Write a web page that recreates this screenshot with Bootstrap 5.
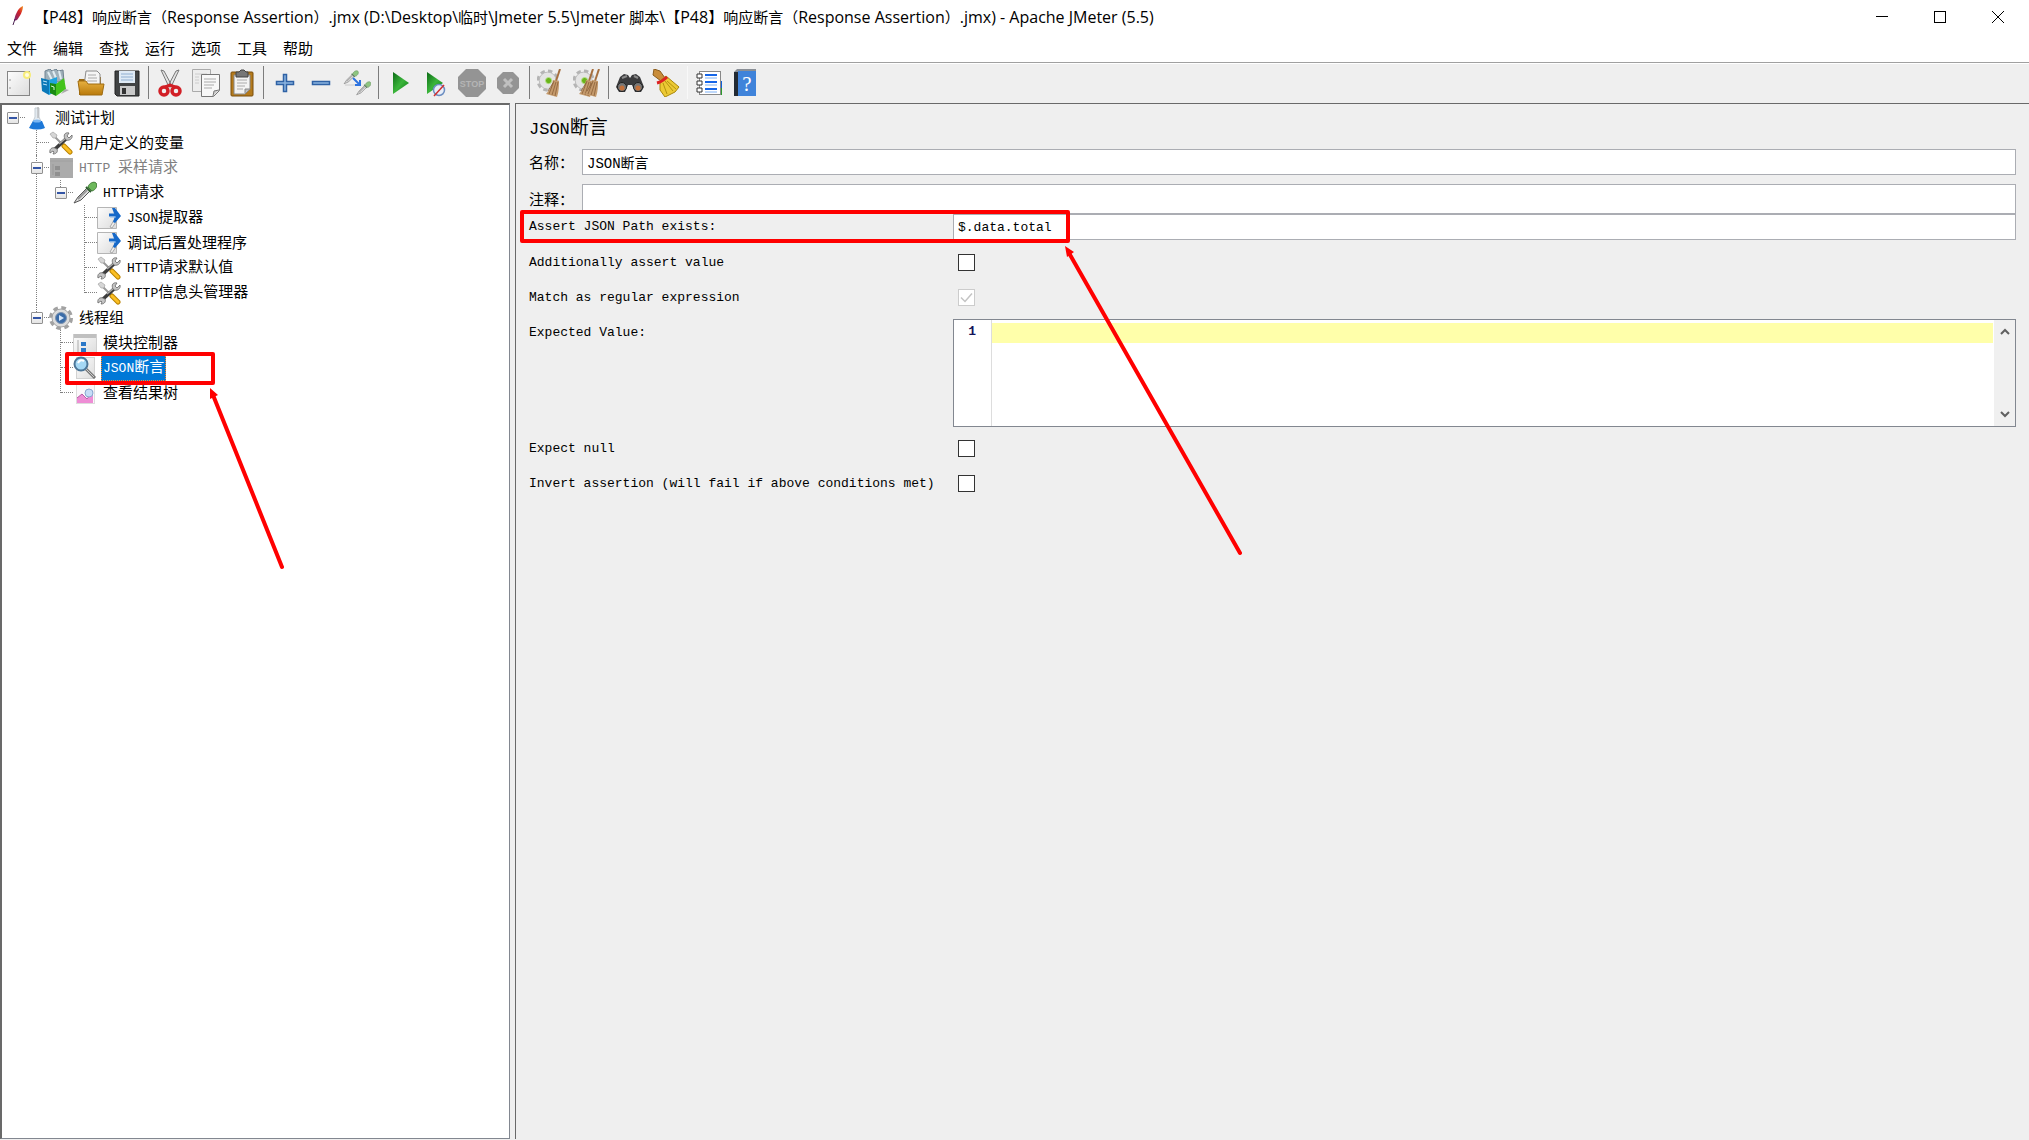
<!DOCTYPE html>
<html lang="zh-CN">
<head>
<meta charset="utf-8">
<meta name="viewport" content="width=device-width, initial-scale=1">
<title>Apache JMeter (5.5)</title>
<link rel="stylesheet" href="https://cdn.jsdelivr.net/npm/bootstrap@5.3.0/dist/css/bootstrap.min.css">
<style>
  :root { --face: #efefef; --edge: #696969; --field: #abadb3; }
  body { font-family: "Liberation Mono", "Noto Sans CJK SC", monospace; font-size: 13px; line-height: 20px; color: #000; background: var(--face); }
  .zh { font-family: "Noto Sans CJK SC", sans-serif; font-size: 15px; }
  svg { display: block; flex: none; }
  .titlebar { height: 36px; padding: 0 2px 2px 4px; background: #fff; }
  .title-text { font-family: "Open Sans", "Noto Sans CJK SC", sans-serif; font-size: 16px; white-space: nowrap; text-spacing-trim: space-all; padding-left: 2px; }
  .win-btn { width: 58px; height: 34px; border: 0; background: transparent; padding: 0; }
  .menubar { height: 27px; padding-left: 7px; gap: 16px; background: #fff; border-bottom: 1px solid #a0a0a0; }
  .menubar a { color: #000; font-family: "Noto Sans CJK SC", sans-serif; font-size: 15px; line-height: 24px; text-decoration: none; }
  .toolbar { height: 40px; padding: 0 0 2px 1px; border-top: 1px solid #fff; }
  .tool { width: 36px; height: 36px; border: 0; padding: 0; background: transparent; display: flex; align-items: center; justify-content: center; }
  .tool-sep { width: 1px; height: 33px; margin: 0 3px; background: #7c7c7c; }
  .tool-sep.faint { background: #f8f8f8; }
  .work { min-height: 0; padding-bottom: 1px; gap: 5px; }
  .tree-pane { width: 510px; flex: none; background: #fff; border: 1px solid #828790; border-width: 2px 1px 1px 2px; border-color: #696969 #828790 #828790 #696969; }
  .tree, .tree ul { list-style: none; margin: 0; padding: 0; }
  .tree { margin-left: -1px; }
  .tree ul { padding-left: 24px; }
  .tree li { position: relative; }
  .tree ul > li::before { content: ""; position: absolute; left: 11px; top: 0; bottom: 0; border-left: 1px dotted #808080; }
  .tree ul > li:last-child::before { bottom: auto; height: 13px; }
  .node { position: relative; display: flex; align-items: center; height: 25px; }
  .node::before { content: ""; position: absolute; left: 12px; width: 12px; top: 12px; border-top: 1px dotted #808080; }
  .twist { position: relative; width: 12px; height: 12px; margin: 0 6px; padding: 0; border: 1px solid #919191; border-radius: 1px; background: linear-gradient(#fff, #e4e4e4); display: flex; align-items: center; justify-content: center; flex: none; }
  .twist::before { content: ""; width: 8px; height: 2px; background: #3455a5; }
  .leaf { width: 24px; flex: none; }
  .caption-text { margin-left: 4px; padding: 0 2px; line-height: 24px; white-space: nowrap; }
  .caption-text.zh { line-height: 22px; padding-bottom: 2px; }
  .node.off .caption-text { color: #808080; }
  .node.sel .caption-text { background: #0078d7; color: #fff; outline: 1px dotted #ff8728; outline-offset: -1px; }
  .panel { border-left: 1px solid var(--edge); border-top: 1px solid var(--edge); padding: 8px 13px 0 13px; min-width: 0; }
  .panel-title { font-size: 17px; line-height: 28px; height: 28px; margin: 0 0 9px; font-weight: 400; }
  .panel-title .zh { font-size: 19px; line-height: 28px; }
  .name-row { margin-bottom: 9px; }
  .field { border: 1px solid var(--field); border-radius: 0; background: #fff; color: #000; padding: 0 4px; height: 26px; font-size: 13px; line-height: 20px; min-width: 0; }
  .field.mixed { font-size: 14px; }
  .field.tall { height: 30px; }
  .short-label { width: 53px; flex: none; }
  .long-label { width: 424px; flex: none; white-space: nowrap; }
  .opts { padding-top: 5px; }
  .opt { height: 35px; }
  .tick { appearance: none; width: 17px; height: 17px; margin: 0 0 0 5px; border: 1px solid #333; background: #fff; border-radius: 0; }
  .tick:disabled { border-color: #ccc; background: #fff url("data:image/svg+xml,%3Csvg xmlns='http://www.w3.org/2000/svg' viewBox='0 0 15 15'%3E%3Cpath d='M2 7.500l4 4 7-8' fill='none' stroke='%23c4c4c4' stroke-width='1.500'/%3E%3C/svg%3E"); }
  .editor { height: 108px; border: 1px solid #828790; background: #fff; }
  .gutter { width: 38px; border-right: 1px solid #ddd; padding: 2px 15px 0 0; text-align: right; font-weight: 700; color: #14145a; }
  .code { border: 0; resize: none; padding: 3px 4px; font-size: 13px; line-height: 20px; outline: 0; overflow: hidden; background: linear-gradient(#ffffaa, #ffffaa) 0 3px / 100% 20px no-repeat; }
  .scroller { width: 22px; background: #f0f0f0; border-left: 1px solid #fff; }
  .scroller button { border: 0; padding: 0; height: 23px; background: transparent; display: flex; align-items: center; justify-content: center; }
  .notes { position: absolute; left: 0; top: 0; pointer-events: none; }
</style>
<script src="https://cdn.jsdelivr.net/npm/bootstrap@5.3.0/dist/js/bootstrap.bundle.min.js"></script>
</head>
<body class="d-flex flex-column vh-100 overflow-hidden position-relative">

<svg width="0" height="0" class="position-absolute" aria-hidden="true">
  <defs>
    <linearGradient id="paper" x1="0" y1="0" x2="1" y2="1"><stop offset="0" stop-color="#fdfdfd"/><stop offset="1" stop-color="#dcdcdc"/></linearGradient>
    <linearGradient id="green" x1="0" y1="0" x2="1" y2="1"><stop offset="0" stop-color="#0c6b16"/><stop offset=".5" stop-color="#3bb53b"/><stop offset="1" stop-color="#0a7a12"/></linearGradient>
    <linearGradient id="gold" x1="0" y1="0" x2="0" y2="1"><stop offset="0" stop-color="#e7b040"/><stop offset="1" stop-color="#b97a0b"/></linearGradient>
    <symbol id="tools" viewBox="0 0 24 24">
      <path d="M5 5l9 9" stroke="#999" stroke-width="2"/><path d="M1 3l3-2 4 3-1 3-3 0z" fill="#d6d6d6" stroke="#999" stroke-width=".6"/>
      <path d="M15 15l6 6" stroke="#b98200" stroke-width="5" stroke-linecap="round"/><path d="M15 15l6 6" stroke="#fbbf24" stroke-width="3" stroke-linecap="round"/>
      <path d="M18 7L5 19" stroke="#3c3c3c" stroke-width="3.500"/><path d="M17 7L10 13" stroke="#aaa" stroke-width="1.500"/>
      <path d="M16 8c-2-4 0-7 4-6l-2 3 2 2 3-3c1 4-3 6-6 5zM6 17c-3-1-6 1-5 5l3-2 1 1-1 2c4 0 5-3 4-5z" fill="#c4c4c4" stroke="#666" stroke-width=".8"/>
    </symbol>
    <symbol id="post" viewBox="0 0 24 24">
      <path d="M.5 1.500h19v21H.5z" fill="url(#paper)" stroke="#b5b5b5"/>
      <path d="M13 21l4-7 2 2-4 6z" fill="#eee" stroke="#999" stroke-width=".8"/>
      <path d="M12 9h7" stroke="#1669c9" stroke-width="3"/><path d="M15 2l3 0 6 8-6 7-2-1 2-6z" fill="#1669c9"/><path d="M13 11h6" stroke="#8dbbec"/>
    </symbol>
    <symbol id="dropper" viewBox="0 0 24 24">
      <path d="M1 22l4-6 9-9 3 3-9 9z" fill="#ddd" stroke="#555"/><path d="M5 18l9-9" stroke="#999" stroke-width="2"/>
      <path d="M13 6l5 5" stroke="#2d5c2d" stroke-width="2"/><path d="M15 6c1-4 6-6 8-4s0 7-4 8z" fill="#6db85c" stroke="#417b36"/>
    </symbol>
    <symbol id="cogbroom" viewBox="0 0 28 28">
      <circle cx="12" cy="13" r="10" fill="none" stroke="#b4b4b4" stroke-width="5" stroke-dasharray="4.500 3.354"/><circle cx="12" cy="13" r="9.500" fill="#e4e4e4" stroke="#b8b8b8"/>
      <circle cx="13" cy="13" r="3.500" fill="#69b519" stroke="#b8df8f"/>
    </symbol>
    <symbol id="brush" viewBox="0 0 16 28">
      <path d="M14 0l-4 12" stroke="#a66f3f" stroke-width="2"/><path d="M7 11l6 1c0 5 0 10-2 16L0 25c4-4 6-9 7-14z" fill="#c49a6c"/>
      <path d="M8 12L3 25M10 13L6 26M12 13L9 27M7 14l-5 8" stroke="#8a5f38" stroke-width=".8"/>
    </symbol>
  </defs>
</svg>

<header class="titlebar d-flex align-items-center">
  <svg width="28" height="28" viewBox="0 0 28 28"><defs><linearGradient id="fe" x1="1" y1="0" x2="0" y2="1"><stop offset="0" stop-color="#f69923"/><stop offset=".4" stop-color="#d22128"/><stop offset="1" stop-color="#6d2a7c"/></linearGradient></defs><path d="M19 3c-4 1-8 8-9 15l3-1c3-4 6-9 6-14z" fill="url(#fe)"/><path d="M11 16l-2 6" stroke="#4a2050"/></svg>
  <span class="title-text flex-grow-1"><span class="zh">【</span>P48<span class="zh">】响应断言（</span>Response Assertion<span class="zh">）</span>.jmx (D:\Desktop\<span class="zh">临时</span>\Jmeter 5.5\Jmeter <span class="zh">脚本</span>\<span class="zh">【</span>P48<span class="zh">】响应断言（</span>Response Assertion<span class="zh">）</span>.jmx) - Apache JMeter (5.5)</span>
  <button class="win-btn" aria-label="最小化"><svg class="mx-auto" width="12" height="12"><path d="M0 5.500h12" stroke="#000"/></svg></button>
  <button class="win-btn" aria-label="最大化"><svg class="mx-auto" width="12" height="12"><rect x=".5" y=".5" width="11" height="11" fill="none" stroke="#000"/></svg></button>
  <button class="win-btn" aria-label="关闭"><svg class="mx-auto" width="12" height="12"><path d="M0 0l12 12M12 0L0 12" stroke="#000"/></svg></button>
</header>

<nav class="menubar d-flex">
  <a href="#">文件</a><a href="#">编辑</a><a href="#">查找</a><a href="#">运行</a><a href="#">选项</a><a href="#">工具</a><a href="#">帮助</a>
</nav>

<div class="toolbar d-flex align-items-center" role="toolbar" aria-label="工具栏">
  <button class="tool" aria-label="新建"><svg width="28" height="28"><rect x="2.500" y="2.500" width="22" height="24" fill="url(#paper)" stroke="#858585"/><path d="M5 10v2M5 18v2" stroke="#999"/><circle cx="22" cy="6" r="4" fill="#f7ec7a"/><circle cx="22" cy="6" r="2" fill="#fffde0"/></svg></button>
  <button class="tool" aria-label="模板"><svg width="28" height="28"><path d="M4 2l5-2 2 2 4-2 2 2 5-1 1 12H4z" fill="#9fb0ba" stroke="#6f8290"/><path d="M7 3l4 8M12 2l3 7M18 2l2 8" stroke="#e1edf2" stroke-width="2"/><path d="M0 9l8 2v15l-7-4z" fill="#0a78b8"/><path d="M8 11l8-3v14l-8 4z" fill="#1fa4e0"/><path d="M2 12l4 1M2 15l4 1" stroke="#bfe6fa"/><path d="M9 14l6 1v12l-6-3z" fill="#1a8a12"/><path d="M15 15l8-6 2 11-10 7z" fill="#44c31c"/><path d="M10 17l3 1v3" stroke="#d6f5cb" fill="none"/><path d="M24 20l4 1-8 4z" fill="#aaa"/></svg></button>
  <button class="tool" aria-label="打开"><svg width="28" height="28"><path d="M2 10h6l2-2h14v18H2z" fill="#9a6a14"/><path d="M9 2h11l3 3v12H7z" fill="#f5f5f5" stroke="#8c8c8c"/><path d="M11 6h8M11 9h9M10 12h10" stroke="#aaa"/><path d="M1 12h8l2 3h16l-2 11H3z" fill="url(#gold)" stroke="#a06c10"/></svg></button>
  <button class="tool" aria-label="保存"><svg width="28" height="28"><path d="M2 2h24v25H4l-2-2z" fill="#414344" stroke="#222"/><rect x="6" y="2" width="16" height="12" fill="#dfeaf5"/><path d="M8 5h12M8 8h12M8 11h12" stroke="#90aed0"/><rect x="7" y="17" width="15" height="9" fill="#c9c9c9"/><rect x="9" y="19" width="4" height="6" fill="#333"/></svg></button>
  <span class="tool-sep"></span>
  <button class="tool" aria-label="剪切"><svg width="28" height="28"><path d="M5 1l3 1 8 15-3 1zM23 1l-3 1-8 15 3 1z" fill="#e4e4e4" stroke="#777"/><ellipse cx="8" cy="22" rx="4" ry="4" fill="none" stroke="#d21f26" stroke-width="3.500"/><ellipse cx="20" cy="22" rx="4" ry="4" fill="none" stroke="#d21f26" stroke-width="3.500"/><path d="M9 18l5-2 5 2" stroke="#d21f26" stroke-width="3" fill="none"/></svg></button>
  <button class="tool" aria-label="复制"><svg width="28" height="28"><path d="M.5.500h18v22H.5z" fill="#ededed" stroke="#aaa"/><path d="M3 5h12M3 8h4M3 11h4M3 14h4" stroke="#ccc"/><path d="M9.500 5.500h18v16l-6 6h-12z" fill="#f8f8f8" stroke="#777"/><path d="M21 27l1-5 5-1" fill="#ccc" stroke="#777"/><path d="M12 10h12M12 13h12M12 16h10M12 19h8" stroke="#aaa"/></svg></button>
  <button class="tool" aria-label="粘贴"><svg width="28" height="28"><rect x="3" y="3" width="22" height="24" rx="1" fill="#b47a1c" stroke="#7a4f0c"/><path d="M6 6h16v14l-5 5H6z" fill="#f3f3f3" stroke="#888"/><path d="M17 24v-4h5" fill="#bbb" stroke="#888"/><path d="M9 11h10M9 14h10M9 17h8M9 20h6" stroke="#aaa"/><path d="M8 3h3l2-2h3l2 2h2v5H8z" fill="#777" stroke="#444"/></svg></button>
  <span class="tool-sep"></span>
  <button class="tool" aria-label="展开"><svg width="28" height="28"><path d="M12.500 5.500h3v7h7v3h-7v7h-3v-7h-7v-3h7z" fill="#8bb4e0" stroke="#2f62a5" stroke-width="1.500"/></svg></button>
  <button class="tool" aria-label="折叠"><svg width="28" height="28"><rect x="5.500" y="12.500" width="17" height="3" fill="#8bb4e0" stroke="#2f62a5" stroke-width="1.500"/></svg></button>
  <button class="tool" aria-label="切换"><svg width="28" height="28"><use href="#dropper" x="0" y="1" width="16" height="15" opacity=".75"/><use href="#dropper" x="13" y="12" width="15" height="15" opacity=".75"/><path d="M2 16h10" stroke="#ccc"/><path d="M10 9l6 6M17 11v5h-5" stroke="#2f74e0" stroke-width="2" fill="none"/></svg></button>
  <span class="tool-sep"></span>
  <button class="tool" aria-label="启动"><svg width="28" height="28"><path d="M7 3l16 11L7 25z" fill="url(#green)"/></svg></button>
  <button class="tool" aria-label="不停顿开始"><svg width="28" height="28"><path d="M5 3l16 11L5 25z" fill="url(#green)"/><circle cx="17" cy="21" r="5.500" fill="#e8eef8" stroke="#6d8fc2" stroke-width="1.500"/><path d="M12 27L22 16" stroke="#cf3030" stroke-width="1.500"/></svg></button>
  <button class="tool" aria-label="停止" disabled><svg width="28" height="28"><path d="M8 0h12l8 8v12l-8 8H8l-8-8V8z" fill="#949494"/><text x="14" y="18" text-anchor="middle" font-family="Liberation Sans" font-weight="700" font-size="9" fill="#b5b5b5">STOP</text></svg></button>
  <button class="tool" aria-label="关闭测试" disabled><svg width="28" height="28"><path d="M9 3h10l6 6v10l-6 6H9l-6-6V9z" fill="#949494"/><path d="M10 10l8 8M18 10l-8 8" stroke="#c0c0c0" stroke-width="3"/></svg></button>
  <span class="tool-sep"></span>
  <button class="tool" aria-label="清除"><svg width="28" height="28"><use href="#cogbroom" x="0" y="0" width="25" height="25"/><use href="#brush" x="9" y="0" width="16" height="28"/></svg></button>
  <button class="tool" aria-label="清除全部"><svg width="28" height="28"><use href="#cogbroom" x="0" y="0" width="25" height="25"/><use href="#brush" x="6" y="0" width="16" height="28"/><use href="#brush" x="12" y="0" width="16" height="28"/></svg></button>
  <span class="tool-sep"></span>
  <button class="tool" aria-label="查找"><svg width="28" height="28"><path d="M4 8l4-3 4 1 2 3 2-3 4-1 4 3 4 10-3 5h-6l-3-7h-4l-3 7H3l-3-5z" fill="#3b3b3d"/><path d="M6 9l5-2M18 7l4 2" stroke="#8b8b8b" stroke-width="2"/><circle cx="6" cy="18" r="4.500" fill="#777" stroke="#222"/><circle cx="22" cy="18" r="4.500" fill="#777" stroke="#222"/><circle cx="6" cy="19" r="2.500" fill="#c4703a"/><circle cx="22" cy="19" r="2.500" fill="#c4703a"/></svg></button>
  <button class="tool" aria-label="重置搜索"><svg width="28" height="28"><path d="M2 0l6 2 5 7-4 3-8-6z" fill="#c98d3a" stroke="#8b5c1b"/><path d="M8 12l6-5 13 11-4 5-10 5-5-7z" fill="#ecc934" stroke="#a8870c"/><path d="M11 14l4 11M13 12l8 10M15 12l9 8" stroke="#b3930f"/><path d="M5 14c4-1 7-3 10-6" stroke="#d22" stroke-width="3" fill="none"/></svg></button>
  <span class="tool-sep faint"></span>
  <button class="tool" aria-label="函数助手"><svg width="28" height="28"><path d="M24 12h3v14h-3z" fill="#2b9b2b"/><path d="M24 12h3v7h-3z" fill="#1060d8"/><rect x="4.500" y="2.500" width="21" height="23" fill="#fff" stroke="#888"/><path d="M10 6h12M10 13h12M10 20h12" stroke="#1666e8" stroke-width="2"/><path d="M10 9h12M10 16h12M10 23h12" stroke="#7db0f5"/><path d="M2 5h5v4H2zM2 12h5v4H2zM2 19h5v4H2z" fill="#fff" stroke="#333"/></svg></button>
  <button class="tool" aria-label="帮助"><svg width="28" height="28"><path d="M3 3l3-3h19v27H3z" fill="#8a8f96"/><path d="M3 3h4v24H3z" fill="#222a33"/><rect x="7" y="2" width="18" height="25" fill="#3f83da"/><text x="16" y="22" text-anchor="middle" font-family="Liberation Serif" font-size="21" fill="#fff">?</text></svg></button>
</div>

<main class="work d-flex flex-grow-1">
  <section class="tree-pane">
    <ul class="tree">
      <li>
        <div class="node"><button class="twist" aria-label="折叠"></button><svg width="24" height="24"><path d="M10 2h4v9l5 11H5l5-11z" fill="#e3eaf0" stroke="#c5cdd4"/><path d="M8 15h9l3 7q-8 3-16 0z" fill="#1c78d8"/><ellipse cx="12" cy="15" rx="4" ry="1.500" fill="#7cb7f2"/><path d="M13 1v11" stroke="#aaa"/></svg><span class="caption-text zh">测试计划</span></div>
        <ul>
          <li><div class="node"><span class="leaf"></span><svg width="24" height="24"><use href="#tools"/></svg><span class="caption-text zh">用户定义的变量</span></div></li>
          <li>
            <div class="node off"><button class="twist" aria-label="折叠"></button><svg width="24" height="24"><rect x="1" y="2" width="23" height="20" fill="#ababab"/><path d="M1 5h23" stroke="#a0a0a0"/><path d="M6 10h5v4H6zM6 16h5v4H6z" fill="#8f8f8f"/><path d="M4 8v11" stroke="#999"/></svg><span class="caption-text">HTTP <span class="zh">采样请求</span></span></div>
            <ul>
              <li>
                <div class="node"><button class="twist" aria-label="折叠"></button><svg width="24" height="24"><use href="#dropper"/></svg><span class="caption-text">HTTP<span class="zh">请求</span></span></div>
                <ul>
                  <li><div class="node"><span class="leaf"></span><svg width="24" height="24"><use href="#post"/></svg><span class="caption-text">JSON<span class="zh">提取器</span></span></div></li>
                  <li><div class="node"><span class="leaf"></span><svg width="24" height="24"><use href="#post"/></svg><span class="caption-text zh">调试后置处理程序</span></div></li>
                  <li><div class="node"><span class="leaf"></span><svg width="24" height="24"><use href="#tools"/></svg><span class="caption-text">HTTP<span class="zh">请求默认值</span></span></div></li>
                  <li><div class="node"><span class="leaf"></span><svg width="24" height="24"><use href="#tools"/></svg><span class="caption-text">HTTP<span class="zh">信息头管理器</span></span></div></li>
                </ul>
              </li>
            </ul>
          </li>
          <li>
            <div class="node"><button class="twist" aria-label="折叠"></button><svg width="24" height="24"><circle cx="12" cy="12" r="10" fill="none" stroke="#a2a2a2" stroke-width="4" stroke-dasharray="4.500 3.354"/><circle cx="12" cy="12" r="9" fill="#dcdcdc" stroke="#a5a5a5"/><circle cx="12" cy="12" r="5.500" fill="#3b6ca8" stroke="#7d93b0"/><path d="M10 9l5 3-5 3z" fill="#d6e6f8"/></svg><span class="caption-text zh">线程组</span></div>
            <ul>
              <li><div class="node"><span class="leaf"></span><svg width="24" height="24"><rect x=".5" y="3.500" width="23" height="20" fill="url(#paper)" stroke="#d0d0d0"/><path d="M1 5h22" stroke="#c0c0c0" stroke-width="4"/><path d="M5 9v14" stroke="#aaa"/><path d="M8 11h5v4H8zM8 17h5v4H8z" fill="#2b78c8"/></svg><span class="caption-text zh">模块控制器</span></div></li>
              <li><div class="node sel"><span class="leaf"></span><svg width="24" height="24"><rect x="3.500" y="1.500" width="18" height="21" fill="url(#paper)" stroke="#d2d2d2"/><path d="M13 13l9 9" stroke="#777" stroke-width="3"/><path d="M13 13l8 8" stroke="#ccc"/><circle cx="8" cy="8" r="6.500" fill="#a5d8f5" stroke="#4c7698" stroke-width="2"/><path d="M5 7q2-4 6-2" stroke="#fff" stroke-width="2" fill="none"/></svg><span class="caption-text">JSON<span class="zh">断言</span></span></div></li>
              <li><div class="node"><span class="leaf"></span><svg width="24" height="24"><rect x="3.500" y="1.500" width="18" height="21" fill="#fbf8fb" stroke="#ddd"/><path d="M4 22v-5l5-4 5 5 6-8v12z" fill="#ee8dd5"/><path d="M4 17l5-4 5 5 6-8" fill="none" stroke="#b85ca8"/><circle cx="16" cy="12" r="4" fill="#c6dcf7" stroke="#88a8d0"/></svg><span class="caption-text zh">查看结果树</span></div></li>
            </ul>
          </li>
        </ul>
      </li>
    </ul>
  </section>

  <section class="panel flex-grow-1">
    <h1 class="panel-title">JSON<span class="zh">断言</span></h1>
    <div class="name-row d-flex align-items-center"><label class="short-label zh" for="name">名称：</label><input id="name" class="field mixed flex-grow-1" type="text" value="JSON断言"></div>
    <div class="d-flex align-items-center"><label class="short-label zh" for="comment">注释：</label><input id="comment" class="field tall flex-grow-1" type="text"></div>
    <div class="d-flex align-items-center"><label class="long-label" for="path">Assert JSON Path exists:</label><input id="path" class="field flex-grow-1" type="text" value="$.data.total"></div>
    <div class="opts">
      <div class="opt d-flex align-items-center"><label class="long-label" for="add">Additionally assert value</label><input id="add" class="tick" type="checkbox"></div>
      <div class="opt d-flex align-items-center"><label class="long-label" for="regex">Match as regular expression</label><input id="regex" class="tick" type="checkbox" checked disabled></div>
    </div>
    <div class="d-flex py-1"><label class="long-label pt-1" for="expected">Expected Value:</label>
      <div class="editor d-flex flex-grow-1">
        <div class="gutter">1</div>
        <textarea id="expected" class="code flex-grow-1"></textarea>
        <div class="scroller d-flex flex-column justify-content-between">
          <button aria-label="向上滚动"><svg width="10" height="7"><path d="M1 6l4-4 4 4" fill="none" stroke="#606060" stroke-width="2"/></svg></button>
          <button aria-label="向下滚动"><svg width="10" height="7"><path d="M1 1l4 4 4-4" fill="none" stroke="#606060" stroke-width="2"/></svg></button>
        </div>
      </div>
    </div>
    <div class="opt d-flex align-items-center"><label class="long-label" for="nul">Expect null</label><input id="nul" class="tick" type="checkbox"></div>
    <div class="opt d-flex align-items-center"><label class="long-label" for="inv">Invert assertion (will fail if above conditions met)</label><input id="inv" class="tick" type="checkbox"></div>
  </section>
</main>

<!-- Red callouts drawn over the window -->
<svg class="notes" width="1260" height="580" aria-hidden="true">
  <g fill="none" stroke="#f00" stroke-width="4" stroke-linejoin="round" stroke-linecap="round">
    <rect x="67" y="354" width="146" height="29"/>
    <rect x="522" y="212" width="546" height="29"/>
    <path d="M213 395L282 567M1069 253L1240 553"/>
  </g>
  <path d="M210 388l8 7-8 4zM1065 246l9 6-7 5z" fill="#f00"/>
</svg>
</body>
</html>
